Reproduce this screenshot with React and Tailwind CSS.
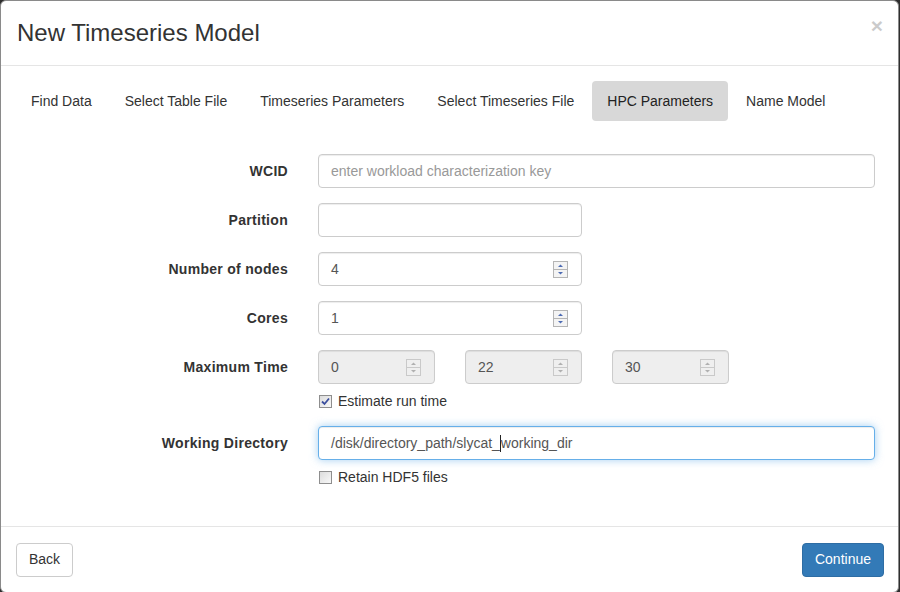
import React from "react";

const font = { fontFamily: '"Liberation Sans", Arial, Helvetica, sans-serif' };

function Spinner({ disabled }) {
  const stroke = disabled ? "#c9c9c9" : "#b5b5b5";
  const fill = disabled ? "#b0b0b0" : "#4d6bb3";
  const bg = disabled ? "#efefef" : "#f4f4f4";
  return (
    <svg width="15" height="17" viewBox="0 0 15 17" className="shrink-0">
      <rect x="0.5" y="0.5" width="14" height="16" fill={bg} stroke={stroke} />
      <line x1="1" y1="8.5" x2="14" y2="8.5" stroke={stroke} />
      <polygon points="5,6 10,6 7.5,3.5" fill={fill} />
      <polygon points="5,11 10,11 7.5,13.5" fill={fill} />
    </svg>
  );
}

function Input({ value, placeholder, spinner, disabled, className = "" }) {
  return (
    <div
      className={`h-[34px] flex items-center justify-between px-[12px] rounded-[4px] border border-[#ccc] shadow-[inset_0_1px_1px_rgba(0,0,0,0.075)] text-[14px] ${
        disabled ? "bg-[#eeeeee]" : "bg-white"
      } ${className}`}
    >
      <span className={placeholder ? "text-[#999]" : "text-[#555]"}>
        {value || placeholder || ""}
      </span>
      {spinner && (
        <span className="mr-[1px]">
          <Spinner disabled={disabled} />
        </span>
      )}
    </div>
  );
}

function Label({ children }) {
  return (
    <div className="w-[272px] shrink-0 text-right font-bold text-[14px] text-[#333] tracking-[0.3px]">
      {children}
    </div>
  );
}

function Checkbox({ checked, label }) {
  return (
    <div className="flex items-center h-[20px] text-[14px] text-[#333]">
      <div className="ml-[1px] w-[13px] h-[13px] border border-[#8e8e8e] bg-gradient-to-br from-[#dcdcdc] to-[#f8f8f8] flex items-center justify-center">
        {checked && (
          <svg width="9" height="9" viewBox="0 0 9 9">
            <path d="M1 4.5 L3.5 7 L8 1.5" fill="none" stroke="#3b4f9e" strokeWidth="1.8" />
          </svg>
        )}
      </div>
      <span className="ml-[6px]">{label}</span>
    </div>
  );
}

export default function App() {
  const tabs = [
    "Find Data",
    "Select Table File",
    "Timeseries Parameters",
    "Select Timeseries File",
    "HPC Parameters",
    "Name Model",
  ];
  return (
    <div className="w-[900px] h-[592px] bg-[#2e2e2e] overflow-hidden" style={font}>
      <div className="w-[899px] h-[593px] bg-white rounded-[6px] border border-[#8a8a8a] flex flex-col">
        {/* Header */}
        <div className="h-[65px] shrink-0 border-b border-[#e5e5e5] flex items-start justify-between pl-[16px] pr-[15px]">
          <div className="mt-[18px] text-[24px] leading-[28px] text-[#333]">New Timeseries Model</div>
          <div className="mt-[14px] text-[21px] leading-[21px] font-bold text-black opacity-20">×</div>
        </div>

        {/* Body */}
        <div className="flex-1 pt-[15px] pl-[15px] pr-[15px]">
          <div className="flex gap-[3px]">
            {tabs.map((t) => (
              <div
                key={t}
                className={`px-[15px] py-[10px] leading-[20px] text-[14px] rounded-[4px] ${
                  t === "HPC Parameters" ? "bg-[#d8d8d8] text-[#222]" : "text-[#333]"
                }`}
              >
                {t}
              </div>
            ))}
          </div>

          <div className="mt-[33px] flex flex-col">
            <div className="flex items-center mb-[15px]">
              <Label>WCID</Label>
              <Input className="ml-[30px] w-[557px]" placeholder="enter workload characterization key" />
            </div>
            <div className="flex items-center mb-[15px]">
              <Label>Partition</Label>
              <Input className="ml-[30px] w-[264px]" />
            </div>
            <div className="flex items-center mb-[15px]">
              <Label>Number of nodes</Label>
              <Input className="ml-[30px] w-[264px]" value="4" spinner />
            </div>
            <div className="flex items-center mb-[15px]">
              <Label>Cores</Label>
              <Input className="ml-[30px] w-[264px]" value="1" spinner />
            </div>
            <div className="flex items-center">
              <Label>Maximum Time</Label>
              <div className="ml-[30px] flex gap-[30px]">
                <Input className="w-[117px]" value="0" spinner disabled />
                <Input className="w-[117px]" value="22" spinner disabled />
                <Input className="w-[117px]" value="30" spinner disabled />
              </div>
            </div>
            <div className="ml-[302px] mt-[7px] mb-[15px]">
              <Checkbox checked label="Estimate run time" />
            </div>
            <div className="flex items-center">
              <Label>Working Directory</Label>
              <div className="ml-[30px] w-[557px] h-[34px] flex items-center px-[12px] rounded-[4px] border border-[#66afe9] shadow-[inset_0_1px_1px_rgba(0,0,0,0.075),0_0_8px_rgba(102,175,233,0.6)] text-[14px] text-[#555] bg-white">
                <span>/disk/directory_path/slycat_</span>
                <span className="inline-block w-[1px] h-[17px] bg-[#222]"></span>
                <span>working_dir</span>
              </div>
            </div>
            <div className="ml-[302px] mt-[7px]">
              <Checkbox label="Retain HDF5 files" />
            </div>
          </div>
        </div>

        {/* Footer */}
        <div className="h-[66px] shrink-0 border-t border-[#e5e5e5] flex items-center justify-between pl-[15px] pr-[14px]">
          <div className="h-[34px] px-[12px] flex items-center rounded-[4px] border border-[#ccc] bg-white text-[14px] text-[#333]">
            Back
          </div>
          <div className="h-[34px] px-[12px] flex items-center rounded-[4px] border border-[#2e6da4] bg-[#337ab7] text-[14px] text-white">
            Continue
          </div>
        </div>
      </div>
    </div>
  );
}
